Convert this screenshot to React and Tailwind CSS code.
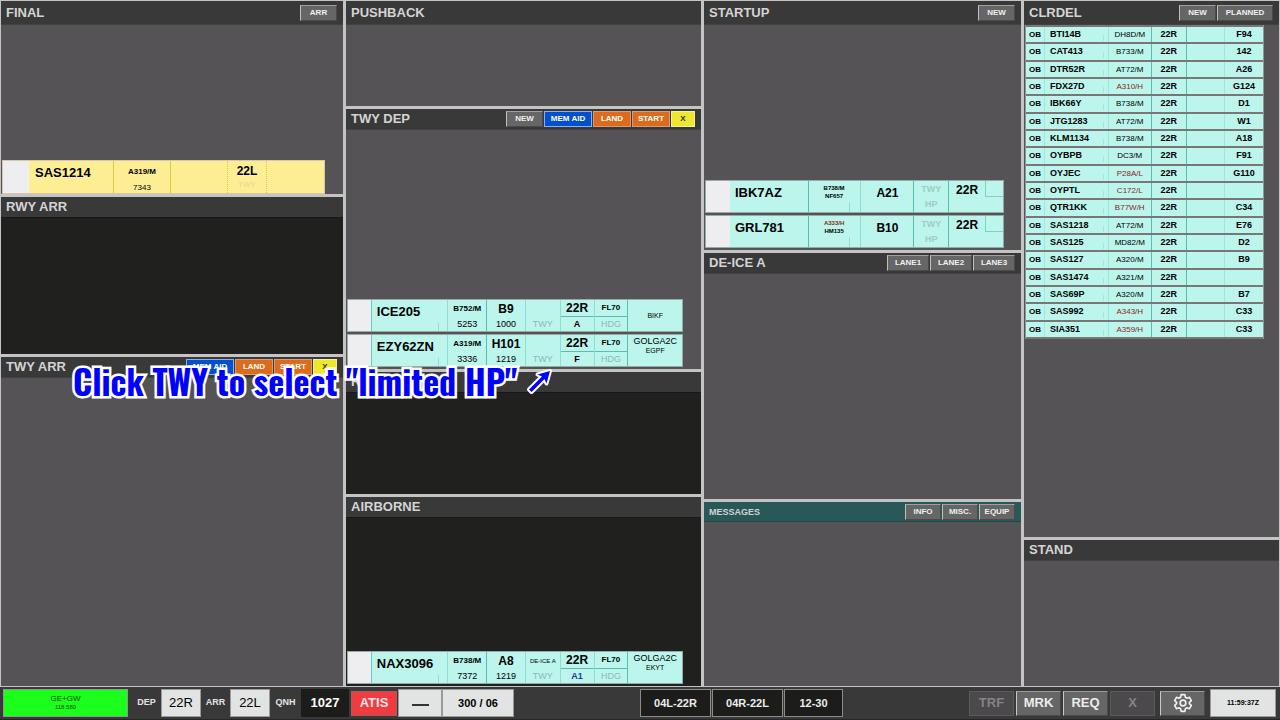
import React from "react";

const toneClass = {
  gray: "bg-[#666666] text-[#f0f0f0] border-t-[#a0a0a0] border-l-[#c0c0c0] border-r-[#4a4a4a] border-b-[#4a4a4a]",
  blue: "bg-[#0050d0] text-white border-[#8fb0e0]",
  orange: "bg-[#de6b1c] text-white border-[#c9a080]",
  yellow: "bg-[#efe72c] text-[#333300] border-[#f5f0a0]",
};

function HeaderButton({ label, tone = "gray", width = "w-[37px]" }) {
  return (
    <button type="button" className={`h-4 ${width} border text-[8px] leading-none font-bold ${toneClass[tone]}`}>
      {label}
    </button>
  );
}

function Panel({ title, grow, dark, tall, message, buttons = [], children }) {
  return (
    <section className={`flex min-h-0 flex-col ${grow} ${dark ? "bg-[#20201f]" : "bg-[#565356]"}`}>
      <header
        className={`flex shrink-0 items-center justify-between border-b pl-[5px] pr-1.5 ${
          tall ? "h-6" : message ? "h-5" : "h-[21px]"
        } ${
          message ? "border-[#1f4747] bg-[#285858]" : dark ? "border-[#181818] bg-[#393939]" : "border-[#424142] bg-[#393939]"
        }`}
      >
        <h2 className={`font-bold text-[#d4d4d4] ${message ? "text-[9px] leading-4" : "text-[13px] leading-4"}`}>{title}</h2>
        <div className="flex gap-px">
          {buttons.map((b) => (
            <HeaderButton key={b.label} {...b} />
          ))}
        </div>
      </header>
      {children}
    </section>
  );
}

const taxiButtons = [
  { label: "MEM AID", tone: "blue", width: "w-12" },
  { label: "LAND", tone: "orange", width: "w-[38px]" },
  { label: "START", tone: "orange", width: "w-[38px]" },
  { label: "X", tone: "yellow", width: "w-6" },
];

const lanes = ["LANE1", "LANE2", "LANE3"].map((label) => ({ label, width: "w-[42px]" }));

function ArrivalStrip() {
  return (
    <div className="mt-auto ml-px mr-[18px] grid h-[34px] grid-cols-[26fr_85fr_57fr_57fr_39fr_57fr] border border-[#d8c6a8] bg-[#fdee93] text-center text-black">
      <div className="bg-[#eeeef0]" />
      <div className="border-r border-[#dcc94a] pl-1.5 pt-1 text-left text-[13px] leading-4 font-bold">SAS1214</div>
      <div className="flex flex-col justify-between border-r border-[#dcc94a] pt-1.5 text-[8px] leading-[10px]">
        <b>A319/M</b>
        <span>7343</span>
      </div>
      <div className="border-r border-dotted border-[#dcc94a]" />
      <div className="border-r border-dotted border-[#dcc94a] pt-1">
        <div className="text-[12px] leading-3 font-bold">22L</div>
        <div className="text-[8px] leading-4 text-[#e6d68a]">TWY</div>
      </div>
      <div />
    </div>
  );
}

function DepartureStrip({ s }) {
  return (
    <div className="grid h-[33px] grid-cols-[24fr_77fr_39fr_39fr_35fr_34fr_34fr_54fr] grid-rows-1 border border-[#93aaa6] bg-[#bbf5ec] text-center text-black">
      <div className="border-r border-[#6cc9be] bg-[#eeeef0]" />
      <div className="flex justify-between border-r border-[#92ddd3] pl-[5px] pr-2 pt-1 text-left text-[13px] leading-4 font-bold">
        {s.call}
        <span className="h-2 self-end border-r border-[#92ddd3]" />
      </div>
      <div className="flex flex-col justify-between border-r border-[#59bdb2] pt-1 pb-0.5 leading-[10px]">
        <b className="text-[8px]">{s.type}</b>
        <span className="text-[9px]">{s.squawk}</span>
      </div>
      <div className="flex flex-col justify-between border-r border-[#92ddd3] pt-[3px] pb-0.5">
        <b className="text-[12px] leading-3">{s.stand}</b>
        <span className="text-[9px] leading-[10px]">{s.time}</span>
      </div>
      <div className="flex flex-col justify-between border-r border-[#92ddd3] pt-1 pb-0.5">
        <span className="text-[6px] leading-[10px] whitespace-nowrap">{s.note}</span>
        <span className="text-[9px] leading-[10px] text-[#8dbab4]">TWY</span>
      </div>
      <div className="flex flex-col border-r border-[#92ddd3]">
        <b className="border-b border-[#59bdb2] text-[12px] leading-4">{s.rwy}</b>
        <b className={`text-[9px] leading-[14px] ${s.hpBlue ? "text-[#243a96]" : ""}`}>{s.hp}</b>
      </div>
      <div className="flex flex-col border-r border-[#59bdb2]">
        <b className="border-b border-[#59bdb2] text-[8px] leading-4">FL70</b>
        <span className="text-[9px] leading-[14px] text-[#8dbab4]">HDG</span>
      </div>
      <div className={`flex flex-col ${s.sid ? "pt-px" : "justify-center"}`}>
        {s.sid && <span className="text-[9px] leading-[10px]">{s.sid}</span>}
        <span className="text-[7px] leading-[10px]">{s.dest}</span>
      </div>
    </div>
  );
}

function StartupStrip({ s }) {
  return (
    <div className="grid h-[33px] grid-cols-[24fr_79fr_53fr_53fr_35fr_36fr_18fr] grid-rows-1 border border-[#93aaa6] bg-[#bbf5ec] text-center text-black">
      <div className="bg-[#eeeef0]" />
      <div className="border-r border-[#59bdb2] pl-[5px] pt-1 text-left text-[13px] leading-4 font-bold">{s.call}</div>
      <div className="flex justify-end border-r border-[#92ddd3] pr-2.5">
        <div className="flex-1 pl-2.5 pt-[3px] text-[6px] leading-2 font-bold">
          <div className={s.heavy ? "text-[#8c1f1a]" : ""}>{s.type}</div>
          <div>{s.flight}</div>
        </div>
        <span className="h-2.5 self-end border-r border-[#92ddd3]" />
      </div>
      <div className="border-r border-[#59bdb2] pt-1 text-[12px] leading-4 font-bold">{s.stand}</div>
      <div className="border-r border-[#59bdb2] pt-px text-[9px] leading-[15px] font-bold text-[#a0ccc6]">
        <div>TWY</div>
        <div>HP</div>
      </div>
      <div className="pt-px text-[12px] leading-4 font-bold">22R</div>
      <div className="h-4 border-b border-l border-[#7fd0c6]" />
    </div>
  );
}

const startups = [
  { call: "IBK7AZ", type: "B738/M", flight: "NF657", stand: "A21" },
  { call: "GRL781", type: "A333/H", flight: "HM135", stand: "B10", heavy: true },
];

const taxiing = [
  { call: "ICE205", type: "B752/M", squawk: "5253", stand: "B9", time: "1000", rwy: "22R", hp: "A", dest: "BIKF" },
  { call: "EZY62ZN", type: "A319/M", squawk: "3336", stand: "H101", time: "1219", rwy: "22R", hp: "F", sid: "GOLGA2C", dest: "EGPF" },
];

const airborne = {
  call: "NAX3096", type: "B738/M", squawk: "7372", stand: "A8", time: "1219",
  note: "DE-ICE A", rwy: "22R", hp: "A1", hpBlue: true, sid: "GOLGA2C", dest: "EKYT",
};

const clearances = [
  ["BTI14B", "DH8D/M", "F94"],
  ["CAT413", "B733/M", "142"],
  ["DTR52R", "AT72/M", "A26"],
  ["FDX27D", "A310/H", "G124", true],
  ["IBK66Y", "B738/M", "D1"],
  ["JTG1283", "AT72/M", "W1"],
  ["KLM1134", "B738/M", "A18"],
  ["OYBPB", "DC3/M", "F91"],
  ["OYJEC", "P28A/L", "G110", true],
  ["OYPTL", "C172/L", "", true],
  ["QTR1KK", "B77W/H", "C34", true],
  ["SAS1218", "AT72/M", "E76"],
  ["SAS125", "MD82/M", "D2"],
  ["SAS127", "A320/M", "B9"],
  ["SAS1474", "A321/M", ""],
  ["SAS69P", "A320/M", "B7"],
  ["SAS992", "A343/H", "C33", true],
  ["SIA351", "A359/H", "C33", true],
];

function ClearanceTable() {
  return (
    <div className="pl-px pr-[15px]">
      <table className="h-[314px] w-full table-fixed border-separate border-spacing-x-0 border-spacing-y-[2px] border-x border-[#8b9a98] bg-[#7a7678] text-center text-[9px] leading-[13px] font-bold text-black">
        <colgroup>
          <col className="w-[8%]" />
          <col className="w-[27%]" />
          <col className="w-[18%]" />
          <col className="w-[15%]" />
          <col className="w-[16%]" />
          <col className="w-[16%]" />
        </colgroup>
        <tbody>
          {clearances.map(([call, type, stand, special]) => (
            <tr key={call} className="bg-[#bbf5ec]">
              <td className="border-r border-[#a2e6dc] p-0 text-[8px]">OB</td>
              <td className="border-r border-[#a2e6dc] py-0 pr-1 pl-[5px]">
                <div className="flex justify-between">
                  {call}
                  <span className="h-1.5 self-end border-r border-[#a2e6dc]" />
                </div>
              </td>
              <td className={`border-r border-[#59bdb2] p-0 text-[8px] font-normal ${special ? "text-[#8c1f1a]" : ""}`}>{type}</td>
              <td className="border-r border-[#59bdb2] p-0">22R</td>
              <td className="border-r border-[#a2e6dc] p-0" />
              <td className="p-0">{stand}</td>
            </tr>
          ))}
        </tbody>
      </table>
    </div>
  );
}

function LightBox({ width, children, className = "", label }) {
  return (
    <button type="button" aria-label={label} className={`h-7 border border-[#9a9a9a] bg-[#e2e4e3] text-black ${width} ${className}`}>
      {children}
    </button>
  );
}

function RunwayButton({ width, children }) {
  return (
    <button type="button" className={`h-7 border border-[#8c8c8c] bg-[#1c1c1b] text-[11px] font-bold text-[#ececec] ${width}`}>
      {children}
    </button>
  );
}

function ToolButton({ children, disabled, label }) {
  return (
    <button
      type="button"
      disabled={disabled}
      aria-label={label}
      className={`flex h-[25px] w-[45px] items-center justify-center border text-[13px] font-bold ${
        disabled
          ? "border-[#5c595c] bg-[#4b494b] text-[#858385]"
          : "border-t-[#9a9a9a] border-l-[#c8c8c8] border-r-[#4a4a4a] border-b-[#4a4a4a] bg-[#666666] text-[#ededed]"
      }`}
    >
      {children}
    </button>
  );
}

function Gear() {
  return (
    <svg viewBox="0 0 24 24" className="size-5" fill="none" stroke="#f0f0f0" strokeWidth="2" strokeLinejoin="round" aria-hidden="true">
      <path d="M9.8 2h4.4l.7 3.1 1.9 1.1 3-1 2.2 3.9-2.3 2.1v1.6l2.3 2.1-2.2 3.9-3-1-1.9 1.1-.7 3.1H9.8l-.7-3.1-1.9-1.1-3 1L2 14.9l2.3-2.1v-1.6L2 9.1l2.2-3.9 3 1 1.9-1.1z" />
      <circle cx="12" cy="12" r="3.4" />
    </svg>
  );
}

function StatusBar() {
  return (
    <footer className="flex h-[33px] shrink-0 items-center justify-between border-b border-[#262626] bg-[#393939] pl-[3px] pr-1">
      <div className="flex items-center text-[9px] font-bold text-[#e4e4e4]">
        <button type="button" className="h-7 w-[125px] border border-[#8c9a8c] bg-[#1cff1c] text-center font-normal text-[#0c4a0c]">
          <span className="block text-[8px] leading-2">GE+GW</span>
          <span className="block text-[6px] leading-2">118.580</span>
        </button>
        <span className="w-[33px] pl-1 text-center">DEP</span>
        <LightBox width="w-10" className="text-[13px] font-normal">22R</LightBox>
        <span className="w-[29px] text-center">ARR</span>
        <LightBox width="w-10" className="text-[13px] font-normal">22L</LightBox>
        <span className="w-[31px] text-center">QNH</span>
        <output className="flex h-7 w-12 items-center justify-center bg-[#1c1c1b] text-[13px] text-white">1027</output>
        <button type="button" className="ml-0.5 h-[25px] w-[46px] border border-[#a06060] bg-[#f03c40] text-[13px] text-[#f6e6e6]">ATIS</button>
        <LightBox width="w-11" label="Not set" className="ml-px flex items-center justify-center">
          <span className="mt-1 h-0.5 w-[17px] bg-[#333333]" />
        </LightBox>
        <LightBox width="w-[72px]" className="text-[11px]">300 / 06</LightBox>
      </div>
      <div className="flex items-center gap-px">
        <RunwayButton width="w-[71px]">04L-22R</RunwayButton>
        <RunwayButton width="w-[71px]">04R-22L</RunwayButton>
        <RunwayButton width="w-[59px]">12-30</RunwayButton>
      </div>
      <div className="flex items-center gap-0.5">
        <ToolButton disabled>TRF</ToolButton>
        <ToolButton>MRK</ToolButton>
        <ToolButton>REQ</ToolButton>
        <ToolButton disabled>X</ToolButton>
        <div className="mx-[3px]">
          <ToolButton label="Settings">
            <Gear />
          </ToolButton>
        </div>
        <time className="flex h-7 w-[66px] items-center justify-center border border-[#9a9a9a] bg-[#e2e4e3] text-[7px] font-bold text-black">
          11:59:37Z
        </time>
      </div>
    </footer>
  );
}

function Hint() {
  return (
    <div className="pointer-events-none absolute top-[357px] left-[73px] flex items-center gap-2 whitespace-nowrap">
      <p className="[font-family:Oswald,'Roboto_Condensed','Open_Sans_Condensed','Noto_Sans_Condensed','Noto_Sans_ExtraCondensed','Liberation_Sans_Narrow','Liberation_Sans',sans-serif] text-[34px] leading-[48px] font-bold text-[#0000ff] [-webkit-text-stroke:5px_#ffffff] [paint-order:stroke_fill]">
        Click TWY to select "limited HP"
      </p>
      <svg viewBox="0 0 28 28" className="size-7" aria-hidden="true">
        <path d="M4 22.5 17 9.5 12.5 7.5 25 4 21.5 16.5 19.5 12 6.5 25Z" fill="#0000ff" stroke="#ffffff" strokeWidth="4" strokeLinejoin="round" paintOrder="stroke" />
      </svg>
    </div>
  );
}

export default function App() {
  return (
    <div className="relative flex min-h-screen flex-col bg-[#c4c4c4] [font-family:'Liberation_Sans',Arial,sans-serif]">
      <main className="grid flex-1 grid-cols-[342fr_355fr_317fr_255fr] gap-[3px] p-px">
        <div className="flex flex-col gap-[3px]">
          <Panel title="FINAL" grow="flex-[193]" tall buttons={[{ label: "ARR" }]}>
            <ArrivalStrip />
          </Panel>
          <Panel title="RWY ARR" grow="flex-[157]" dark />
          <Panel title="TWY ARR" grow="flex-[329]" buttons={taxiButtons} />
        </div>
        <div className="flex flex-col gap-[3px]">
          <Panel title="PUSHBACK" grow="flex-[105]" tall />
          <Panel title="TWY DEP" grow="flex-[260]" buttons={[{ label: "NEW" }, ...taxiButtons]}>
            <div className="mt-auto mb-0.5 ml-px mr-[18px] flex flex-col gap-0.5">
              {taxiing.map((s) => (
                <DepartureStrip key={s.call} s={s} />
              ))}
            </div>
          </Panel>
          <Panel title="RWY DEP" grow="flex-[122]" dark />
          <Panel title="AIRBORNE" grow="flex-[189]" dark>
            <div className="mt-auto mb-0.5 ml-px mr-[18px]">
              <DepartureStrip s={airborne} />
            </div>
          </Panel>
        </div>
        <div className="flex flex-col gap-[3px]">
          <Panel title="STARTUP" grow="flex-[249]" tall buttons={[{ label: "NEW" }]}>
            <div className="mt-auto mb-0.5 ml-px mr-[17px] flex flex-col gap-0.5">
              {startups.map((s) => (
                <StartupStrip key={s.call} s={s} />
              ))}
            </div>
          </Panel>
          <Panel title="DE-ICE A" grow="flex-[246]" buttons={lanes} />
          <Panel
            title="MESSAGES"
            grow="flex-[184]"
            message
            buttons={["INFO", "MISC.", "EQUIP"].map((label) => ({ label, width: "w-9" }))}
          />
        </div>
        <div className="flex flex-col gap-[3px]">
          <Panel title="CLRDEL" grow="flex-[536]" tall buttons={[{ label: "NEW" }, { label: "PLANNED", width: "w-14" }]}>
            <ClearanceTable />
          </Panel>
          <Panel title="STAND" grow="flex-[146]" />
        </div>
      </main>
      <StatusBar />
      <Hint />
    </div>
  );
}
